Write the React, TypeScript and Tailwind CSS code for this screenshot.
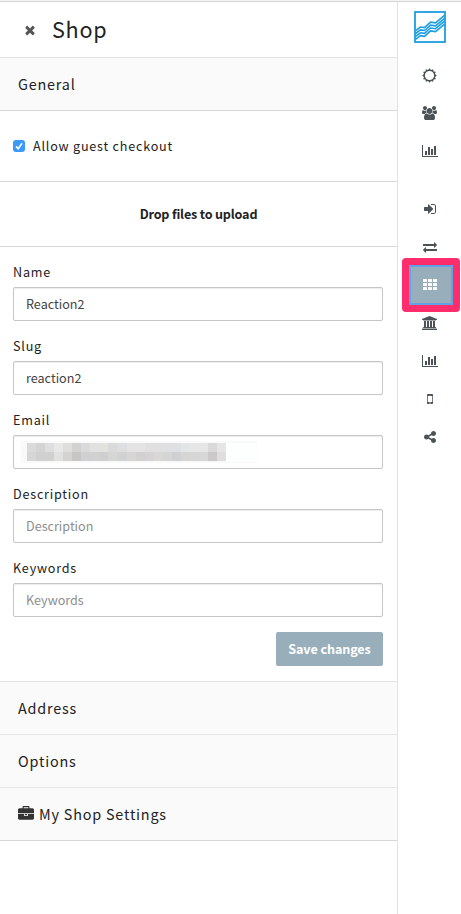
import React from "react";

const latin = "font-['Noto_Sans_CJK_SC','Noto_Sans',sans-serif]";

const paths = {
  times: "M1490 1322q0 40-28 68l-136 136q-28 28-68 28t-68-28l-294-294-294 294q-28 28-68 28t-68-28l-136-136q-28-28-28-68t28-68l294-294-294-294q-28-28-28-68t28-68l136-136q28-28 68-28t68 28l294 294 294-294q28-28 68-28t68 28l136 136q28 28 28 68t-28 68l-294 294 294 294q28 28 28 68z",
  users: "M529 896q-162 5-265 128h-134q-82 0-138-40.5t-56-118.5q0-353 124-353 6 0 43.5 21t97.5 42.5 119 21.5q67 0 133-23-5 37-5 66 0 139 81 256zm1071 637q0 120-73 189.5t-194 69.5h-874q-121 0-194-69.5t-73-189.5q0-53 3.5-103.5t14-109 26.5-108.5 43-97.5 62-81 85.5-53.5 111.5-20q10 0 43 21.5t73 48 107 48 135 21.5 135-21.5 107-48 73-48 43-21.5q61 0 111.5 20t85.5 53.5 62 81 43 97.5 26.5 108.5 14 109 3.5 103.5zm-1024-1277q0 106-75 181t-181 75-181-75-75-181 75-181 181-75 181 75 75 181zm704 384q0 159-112.5 271.5t-271.5 112.5-271.5-112.5-112.5-271.5 112.5-271.5 271.5-112.5 271.5 112.5 112.5 271.5zm576 225q0 78-56 118.5t-138 40.5h-134q-103-123-265-128 81-117 81-256 0-29-5-66 66 23 133 23 59 0 119-21.5t97.5-42.5 43.5-21q124 0 124 353zm-128-609q0 106-75 181t-181 75-181-75-75-181 75-181 181-75 181 75 75 181z",
  chart: "M640 896v512H384V896h256zm384-512v1024H768V384h256zm1024 1152v128H0V128h128v1408h1920zm-640-896v768h-256V640h256zm384-384v1152h-256V256h256z",
  signIn: "M1312 896q0 26-19 45l-544 544q-19 19-45 19t-45-19-19-45v-288h-448q-26 0-45-19t-19-45v-384q0-26 19-45t45-19h448v-288q0-26 19-45t45-19 45 19l544 544q19 19 19 45zm352-352v704q0 119-84.5 203.5t-203.5 84.5h-320q-13 0-22.5-9.5t-9.5-22.5q0-4-1-20t-.5-26.5 3-23.5 10-19.5 20.5-6.5h320q66 0 113-47t47-113v-704q0-66-47-113t-113-47h-312l-11.5-1-11.5-3-8-5.5-7-9-2-13.5q0-4-1-20t-.5-26.5 3-23.5 10-19.5 20.5-6.5h320q119 0 203.5 84.5t84.5 203.5z",
  exchange: "M1792 1184v192q0 13-9.5 22.5t-22.5 9.5h-1376v192q0 13-9.5 22.5t-22.5 9.5q-12 0-24-10l-319-320q-9-9-9-22 0-14 9-23l320-320q9-9 23-9 13 0 22.5 9.5t9.5 22.5v192h1376q13 0 22.5 9.5t9.5 22.5zm0-544q0 14-9 23l-320 320q-9 9-23 9-13 0-22.5-9.5t-9.5-22.5v-192h-1376q-13 0-22.5-9.5t-9.5-22.5v-192q0-13 9.5-22.5t22.5-9.5h1376v-192q0-14 9-23t23-9q12 0 24 10l319 319q9 9 9 23z",
  university: "M832 0l960 384v128h-128q0 26-20.5 45t-48.5 19h-1526q-28 0-48.5-19t-20.5-45h-128v-128zm-704 640h256v768h128v-768h256v768h128v-768h256v768h128v-768h256v768h59q28 0 48.5 19t20.5 45v64h-1664v-64q0-26 20.5-45t48.5-19h59v-768zm1595 960q28 0 48.5 19t20.5 45v128h-1920v-128q0-26 20.5-45t48.5-19h1782z",
  mobile: "M976 1408q0-33-23.5-56.5t-56.5-23.5-56.5 23.5-23.5 56.5 23.5 56.5 56.5 23.5 56.5-23.5 23.5-56.5zm208-160v-704q0-13-9.5-22.5t-22.5-9.5h-512q-13 0-22.5 9.5t-9.5 22.5v704q0 13 9.5 22.5t22.5 9.5h512q13 0 22.5-9.5t9.5-22.5zm-192-848q0-16-16-16h-160q-16 0-16 16t16 16h160q16 0 16-16zm288-16v1024q0 52-38 90t-90 38h-512q-52 0-90-38t-38-90v-1024q0-52 38-90t90-38h512q52 0 90 38t38 90z",
  share: "M1344 1024q133 0 226.5 93.5t93.5 226.5-93.5 226.5-226.5 93.5-226.5-93.5-93.5-226.5q0-12 2-34l-360-180q-92 86-218 86-133 0-226.5-93.5t-93.5-226.5 93.5-226.5 226.5-93.5q126 0 218 86l360-180q-2-22-2-34 0-133 93.5-226.5t226.5-93.5 226.5 93.5 93.5 226.5-93.5 226.5-226.5 93.5q-126 0-218-86l-360 180q2 22 2 34t-2 34l360 180q92-86 218-86z",
  briefcase: "M640 256h512v-128h-512v128zm1152 640v480q0 66-47 113t-113 47h-1472q-66 0-113-47t-47-113v-480h672v160q0 26 19 45t45 19h320q26 0 45-19t19-45v-160h672zm-768 0v128h-256v-128h256zm768-480v384h-1792v-384q0-66 47-113t113-47h352v-160q0-40 28-68t68-28h576q40 0 68 28t28 68v160h352q66 0 113 47t47 113z",
};

function Icon({ d, box = "0 0 1792 1792", className }: { d: string; box?: string; className: string }) {
  return (
    <svg viewBox={box} className={`fill-current ${className}`}>
      <path d={d} />
    </svg>
  );
}

function Sun() {
  const rays = Array.from({ length: 24 }, (_, i) => {
    const r = i % 2 ? 5.7 : 7.3;
    const a = (i * Math.PI) / 12;
    return `${7.5 + r * Math.sin(a)},${7.5 - r * Math.cos(a)}`;
  });
  return (
    <svg viewBox="0 0 15 15" className="size-[15px] fill-current">
      <path fillRule="evenodd" d={`M${rays.join("L")}ZM7.5 2.9a4.6 4.6 0 1 0 0 9.2a4.6 4.6 0 1 0 0-9.2Z`} />
    </svg>
  );
}

function Grid() {
  return (
    <svg viewBox="0 0 14 14" className="size-[14px] fill-white">
      {[1, 5, 9].map((y) => [0, 5, 10].map((x) => <rect key={`${x}-${y}`} x={x} y={y} width="4" height="3" rx="0.5" />))}
    </svg>
  );
}

function Logo() {
  const line = "l5-3.6 4 .6 6-5.4 5 .7 9-7.5";
  return (
    <svg viewBox="0 0 32 32" className="h-8 w-8 fill-none stroke-[#1d9ee2]">
      <rect x="1" y="1" width="30" height="30" strokeWidth="1.8" />
      {[19.6, 22.5, 25.4, 28.3].map((y) => (
        <path key={y} d={`M1.5 ${y}${line}`} strokeWidth="1.6" />
      ))}
    </svg>
  );
}

function Field({ label, value, placeholder, children }: { label: string; value?: string; placeholder?: string; children?: React.ReactNode }) {
  return (
    <div className="mb-[15px]">
      <label className="mb-[5px] block h-5 text-[12.6px] leading-5 tracking-[0.78px]">{label}</label>
      <div className="flex h-[34px] items-center rounded-[2px] border border-[#c6c6c6] px-3 shadow-[inset_0_1px_1px_rgba(0,0,0,0.075)]">
        {children ?? (
          <input
            defaultValue={value}
            placeholder={placeholder}
            className="w-full bg-transparent text-[12.6px] text-[#444] outline-none placeholder:text-[#8e8e8e]"
          />
        )}
      </div>
    </div>
  );
}

const mosaicTop = ["#dadada", "#d4d4d5", "#dedee1", "#e8e8e8", "#dededd", "#d3d2d3", "#dadada", "#e1e1df", "#e2e2df", "#dadadb", "#dddedf", "#e4e4e4", "#e4e4e4", "#e0e0df", "#e0e0e0", "#e0e0e3", "#dfe0e1", "#e3e6e6", "#e7e7e7", "#e6e6e6", "#d9d9d9", "#e5e5e5"];
const mosaicBottom = ["#d6d6d8", "#d0d0d0", "#d0d0d0", "#e1e1e0", "#d3d3d1", "#c8c5c7", "#d0d0d2", "#d2d1d2", "#cfcfcf", "#d6d6d5", "#d1d3d3", "#d6d6d5", "#d3d0d1", "#d5d3d3", "#d8d8d7", "#d5d5d6", "#cfd0d1", "#d5d5d4", "#d6d6d6", "#d7d7d7", "#cbc8ca", "#dedede"];

function Mosaic() {
  return (
    <div className="-ml-[5px] flex h-[22px] items-center bg-[#f9f9f9] pl-[6px]">
      <div className="grid w-[199px] grid-cols-22">
        {[...mosaicTop, ...mosaicBottom].map((c, i) => (
          <span key={i} className="h-[9px]" style={{ backgroundColor: c }} />
        ))}
      </div>
      <div className="h-[19px] w-[31px] bg-[#fdfefe]" />
    </div>
  );
}

function Section({ title, last, children }: { title: string; last?: boolean; children?: React.ReactNode }) {
  return (
    <div className={`flex h-[53px] items-center border-b bg-[#fafafa] pl-[18px] text-[14.4px] tracking-[0.8px] ${last ? "border-[#d8d8d8]" : "border-[#e6e6e6]"}`}>
      {children}
      <span>{title}</span>
    </div>
  );
}

function Item({ children }: { children: React.ReactNode }) {
  return <button className="flex h-[38px] w-full items-center justify-center">{children}</button>;
}

export default function App() {
  return (
    <div className={`flex h-[914px] w-[461px] flex-col overflow-hidden bg-white text-[#222] ${latin}`}>
      <div className="h-[2px] shrink-0 border-b border-[#d4d4d4] bg-[#f3f3f3]" />
      <div className="flex flex-1">
        <main className="w-[398px] border-r border-[#e3e3e3]">
          <header className="flex h-14 items-center border-b border-[#e3e3e3] pl-[23px]">
            <Icon d={paths.times} className="size-[14px] text-[#555]" />
            <h1 className="ml-[15px] pb-[2px] text-[21.6px] leading-none tracking-[0.7px]">Shop</h1>
          </header>
          <Section title="General" last />
          <label className="flex h-[71px] items-center border-b border-[#d8d8d8] pl-[13px] text-[12.6px] tracking-[0.78px]">
            <span className="flex size-3 items-center justify-center rounded-[3px] bg-[#3b99fc]">
              <svg viewBox="0 0 12 12" className="size-3 fill-none stroke-white">
                <path d="M3 6.4l2.2 2.3L9 3.3" strokeWidth="1.6" />
              </svg>
            </span>
            <span className="ml-2">Allow guest checkout</span>
          </label>
          <div className="flex h-[65px] items-center justify-center border-b border-[#d8d8d8] text-[12.6px] font-bold tracking-[-0.18px]">Drop files to upload</div>
          <form className="h-[435px] border-b border-[#e3e3e3] px-[13px] pt-[15px] pr-[14px]">
            <Field label="Name" value="Reaction2" />
            <Field label="Slug" value="reaction2" />
            <Field label="Email">
              <Mosaic />
            </Field>
            <Field label="Description" placeholder="Description" />
            <Field label="Keywords" placeholder="Keywords" />
            <button type="button" className="ml-auto block h-[34px] w-[107px] rounded-[2px] bg-[#98afbb] text-[12.6px] font-bold tracking-[-0.1px] text-white">
              Save changes
            </button>
          </form>
          <Section title="Address" />
          <Section title="Options" />
          <Section title="My Shop Settings" last>
            <Icon d={paths.briefcase} className="mr-[5px] size-4 text-[#333]" />
          </Section>
        </main>
        <aside className="flex w-[63px] flex-col items-center text-[#4c5356]">
          <div className="mt-[9px] mb-[13px]">
            <Logo />
          </div>
          <Item><Sun /></Item>
          <Item><Icon d={paths.users} box="-64 0 1920 1792" className="h-[14px] w-[15px]" /></Item>
          <Item><Icon d={paths.chart} box="0 0 2048 1792" className="h-[14px] w-4" /></Item>
          <div className="h-5" />
          <Item><Icon d={paths.signIn} className="size-[14px]" /></Item>
          <Item><Icon d={paths.exchange} className="size-[14px]" /></Item>
          <div className="relative flex h-[38px] w-full items-center justify-center">
            <div className="absolute -top-[8px] left-1 flex h-[54px] w-[58px] items-center justify-center rounded-[4px] border-[7px] border-[#ff2d6c] bg-[#98afbb]">
              <div className="flex h-10 w-11 items-center justify-center border-2 border-[#64a0e4] pr-[2px]"><Grid /></div>
            </div>
          </div>
          <Item><Icon d={paths.university} box="-128 0 1920 1792" className="h-[14px] w-[15px]" /></Item>
          <Item><Icon d={paths.chart} box="0 0 2048 1792" className="h-[14px] w-4" /></Item>
          <Item><Icon d={paths.mobile} className="size-[14px]" /></Item>
          <Item><Icon d={paths.share} className="size-[14px]" /></Item>
        </aside>
      </div>
    </div>
  );
}
